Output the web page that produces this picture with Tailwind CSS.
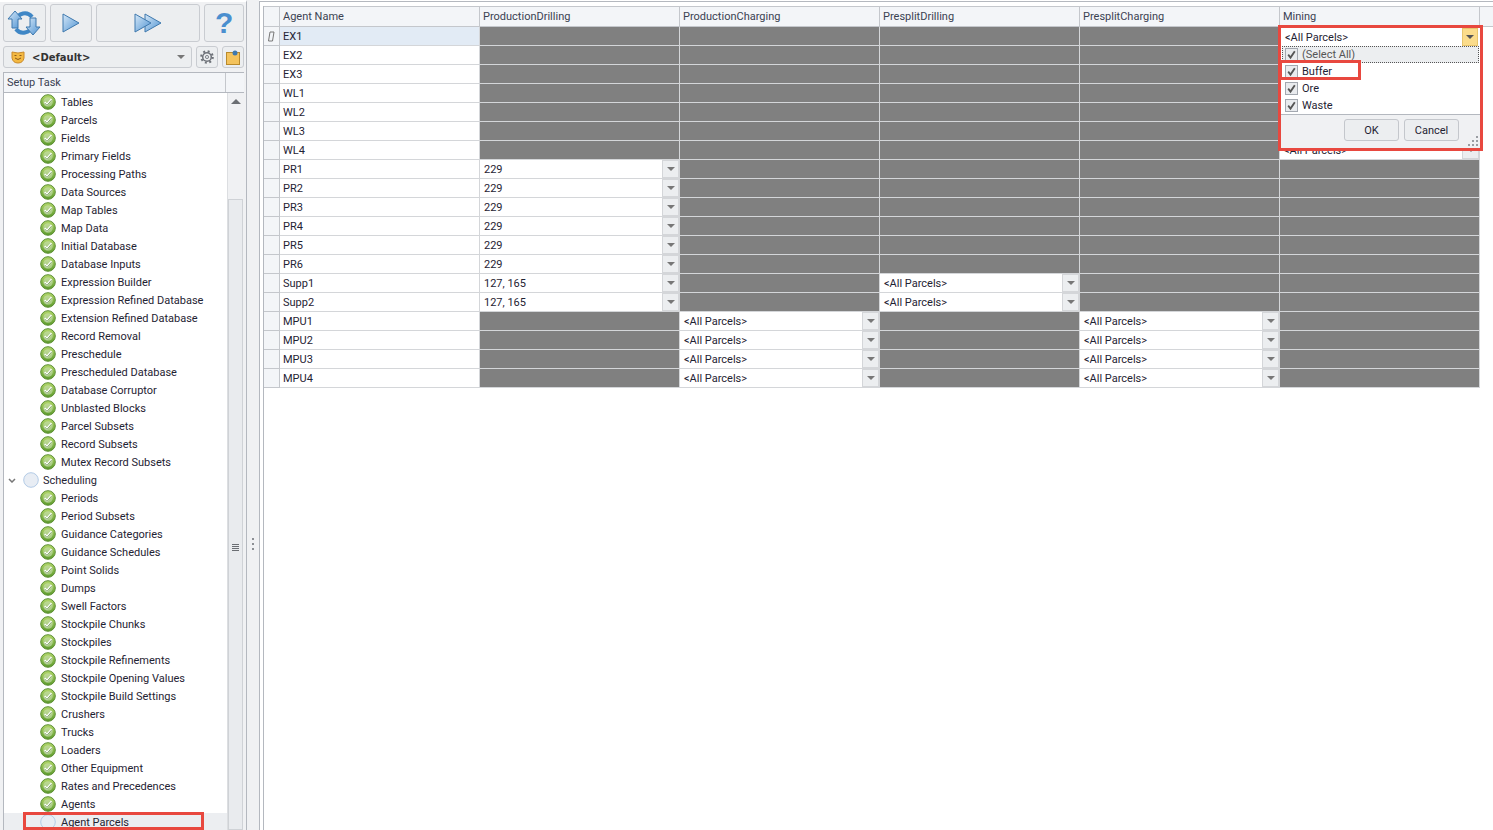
<!DOCTYPE html>
<html lang="en">
<head>
  <meta charset="UTF-8" />
  <title>Agent Parcels</title>
  <script src="https://cdn.jsdelivr.net/npm/@tailwindcss/browser@4"></script>
</head>
<body class="h-screen overflow-hidden bg-white font-['Roboto',sans-serif] text-[11px] text-[#1f2333]">
<svg class="absolute h-0 w-0">
  <defs>
    <linearGradient id="g" x1="0" y1="0" x2="0" y2="1"><stop offset="0" stop-color="#b4d86a"/><stop offset="1" stop-color="#5c9a2c"/></linearGradient>
    <linearGradient id="b" x1="0" y1="0" x2="1" y2="1"><stop offset="0" stop-color="#d6e8f8"/><stop offset="1" stop-color="#4f93d2"/></linearGradient>
    <symbol id="ok" viewBox="0 0 16 16">
      <circle cx="8" cy="8" r="7.3" fill="url(#g)" stroke="#5d8f35"/>
      <circle cx="8" cy="8" r="4.8" fill="#d3e6c0" fill-opacity=".55"/>
      <path d="M4.6 8.2 7 10.6 11.6 5.4" fill="none" stroke="#fff" stroke-width="2"/>
      <path d="M4.6 8.9 7 11.3 11.6 6.1" fill="none" stroke="#4d7d2b" stroke-width=".7"/>
    </symbol>
    <symbol id="todo" viewBox="0 0 16 16">
      <circle cx="8" cy="8" r="7.3" fill="#e8edf4" stroke="#b3cbe6"/>
    </symbol>
    <symbol id="tick" viewBox="0 0 13 13">
      <rect x=".5" y=".5" width="12" height="12" fill="#e9ebee" stroke="#a3a8b0"/>
      <path d="M3.2 6.6 5.5 9.6 9.8 3.2" fill="none" stroke="#555" stroke-width="1.8"/>
    </symbol>
  </defs>
</svg>

<div class="flex h-full">
  <!-- left panel -->
  <aside class="flex h-full w-[247px] shrink-0 flex-col border-r border-t-2 border-[#b4b8bf] border-t-white bg-[#f0f1f3] pl-[3px] pr-[2px] pt-[2px]">
    <div class="flex h-[38px] gap-[4px]">
      <button class="flex w-[43px] items-center justify-center rounded-[3px] border border-[#c9ccd1] bg-[#eceef0]">
        <svg width="34" height="30" viewBox="0 0 34 30">
          <path d="M9 12 A9 9 0 0 1 25 9" fill="none" stroke="#3f87c6" stroke-width="4"/>
          <path d="M25 18 A9 9 0 0 1 9 21" fill="none" stroke="#3f87c6" stroke-width="4"/>
          <path d="M1 11 8 3 15 11 11 11 11 20 5 20 5 11Z" fill="url(#b)" stroke="#3f79ae"/>
          <path d="M19 19 26 27 33 19 29 19 29 10 23 10 23 19Z" fill="url(#b)" stroke="#3f79ae"/>
        </svg>
      </button>
      <button class="flex w-[42px] items-center justify-center rounded-[3px] border border-[#c9ccd1] bg-[#eceef0]">
        <svg width="20" height="22" viewBox="0 0 20 22"><path d="M2 2 18 11 2 20Z" fill="url(#b)" stroke="#3f79ae"/></svg>
      </button>
      <button class="flex w-[105px] items-center justify-center rounded-[3px] border border-[#c9ccd1] bg-[#eceef0]">
        <svg width="30" height="22" viewBox="0 0 30 22"><path d="M12 2 28 11 12 20Z" fill="url(#b)" stroke="#3f79ae"/><path d="M2 2 18 11 2 20Z" fill="url(#b)" stroke="#3f79ae"/></svg>
      </button>
      <button class="flex w-[40px] items-center justify-center rounded-[3px] border border-[#c9ccd1] bg-[#eceef0] font-['Liberation_Sans',sans-serif] text-[30px] font-bold leading-none text-[#4a8fcf]">?</button>
    </div>
    <div class="mt-[4px] flex h-[22px] gap-[4px]">
      <div class="flex w-[190px] items-center rounded-[3px] border border-[#c9ccd1] bg-[#eceef0] pl-[7px] pr-[6px]">
        <svg width="14" height="14" viewBox="0 0 14 14"><path d="M1 2Q7 4 13 2V8Q12 13 7 13 2 13 1 8Z" fill="#f4b942" stroke="#c98a2a"/><path d="M4 8Q7 11 10 8" fill="none" stroke="#8a5a1a"/><path d="M3.500 5.500H5.500M8.500 5.500H10.500" stroke="#8a5a1a"/></svg>
        <span class="ml-[7px] font-['DejaVu_Sans',sans-serif] text-[10px] font-bold text-[#333]">&lt;Default&gt;</span>
        <svg class="ml-auto" width="8" height="4" viewBox="0 0 8 4"><path d="M0 0H8L4 4Z" fill="#777"/></svg>
      </div>
      <button class="flex w-[22px] items-center justify-center rounded-[3px] border border-[#c9ccd1] bg-[#eceef0]">
        <svg width="14" height="14" viewBox="0 0 14 14"><circle cx="7" cy="7" r="4.300" fill="none" stroke="#6d7178" stroke-width="1.500"/><circle cx="7" cy="7" r="5.800" fill="none" stroke="#6d7178" stroke-width="2" stroke-dasharray="2 2.550"/><circle cx="7" cy="7" r="1.600" fill="#dfe2e6" stroke="#6d7178" stroke-width=".8"/></svg>
      </button>
      <button class="flex w-[22px] items-center justify-center rounded-[3px] border border-[#c9ccd1] bg-[#eceef0]">
        <svg width="14" height="15" viewBox="0 0 14 15"><rect x=".5" y="2.500" width="13" height="12" fill="#f4c35c" stroke="#b98a2c"/><circle cx="9" cy="3" r="2.500" fill="#3f79ae"/></svg>
      </button>
    </div>
    <div class="mt-[4px] flex min-h-0 flex-1 flex-col border-l border-t border-[#b4b8bf] bg-white">
      <div class="flex h-[20px] shrink-0 border-b border-[#b4b8bf] bg-[#f3f5f8]">
        <div class="flex w-[222px] items-center border-r border-[#c4c7cc] pl-[3px] pt-[2px] text-[#3b4252]">Setup Task</div>
      </div>
      <div class="flex min-h-0 flex-1">
        <ul id="tree" class="min-w-0 flex-1 overflow-hidden pt-0"></ul>
        <div class="relative h-full w-[17px] shrink-0 border-l border-[#dcdee1] bg-[#f0f1f3]">
          <svg class="absolute left-[3px] top-[6px]" width="10" height="5" viewBox="0 0 10 5"><path d="M0 5H10L5 0Z" fill="#6b6e73"/></svg>
          <div class="absolute bottom-0 left-0 top-[106px] w-[15px] border border-[#cfd2d6] bg-[#e9ebee]">
            <div class="absolute left-[3px] top-[344px] h-[7px] w-[7px] border-y-[3px] border-double border-[#6b6e73]"></div>
          </div>
        </div>
      </div>
    </div>
  </aside>

  <!-- splitter -->
  <div class="flex h-full w-[12px] shrink-0 flex-col items-center justify-center gap-[3px] bg-[#f0f1f3] pt-[258px]">
    <i class="h-[2px] w-[2px] bg-[#8c8f94]"></i><i class="h-[2px] w-[2px] bg-[#8c8f94]"></i><i class="h-[2px] w-[2px] bg-[#8c8f94]"></i>
  </div>

  <!-- grid panel -->
  <main class="relative mt-px h-[829px] min-w-0 flex-1 border-l border-t border-[#b4b8bf] bg-white pl-[3px] pt-[4px]">
    <div class="h-full border-l border-[#b4b8bf]">
      <div id="head" class="flex h-[21px] border-y border-[#c4c7cc] bg-[#f3f5f8] text-[#3b4252]"></div>
      <div id="rows"></div>
    </div>

    <!-- filter dropdown -->
    <div class="absolute left-[1018px] top-[23px] flex h-[126px] w-[205px] flex-col border-[3px] border-[#e8483f] bg-white">
      <div class="flex h-[18px] shrink-0 items-center pl-[4px] pr-[2px]">
        <span class="flex-1 pt-[2px]">&lt;All Parcels&gt;</span>
        <div class="flex h-full w-[16px] items-center justify-center border border-[#e8c56d] bg-[#fbdc8b]">
          <svg width="8" height="4" viewBox="0 0 8 4"><path d="M0 0H8L4 4Z" fill="#555"/></svg>
        </div>
      </div>
      <div class="mx-[1px] flex h-[17px] items-center gap-[4px] border border-dotted border-[#555] bg-[#eceef0] pl-[2px] text-[#555]">
        <svg width="13" height="13"><use href="#tick"/></svg><span class="pt-[2px]">(Select All)</span>
      </div>
      <div class="flex h-[17px] items-center gap-[4px] pl-[4px]"><svg width="13" height="13"><use href="#tick"/></svg><span class="pt-[2px]">Buffer</span></div>
      <div class="flex h-[17px] items-center gap-[4px] pl-[4px]"><svg width="13" height="13"><use href="#tick"/></svg><span class="pt-[2px]">Ore</span></div>
      <div class="flex h-[17px] items-center gap-[4px] pl-[4px]"><svg width="13" height="13"><use href="#tick"/></svg><span class="pt-[2px]">Waste</span></div>
      <div class="relative flex flex-1 items-start justify-end gap-[5px] border-t border-[#b4b8bf] bg-[#f0f1f3] pr-[21px] pt-[4px]">
        <button class="h-[22px] w-[55px] rounded-[3px] border border-[#c4c7cc] bg-[#eceef0] pt-[2px]">OK</button>
        <button class="h-[22px] w-[55px] rounded-[3px] border border-[#c4c7cc] bg-[#eceef0] pt-[2px]">Cancel</button>
        <svg class="absolute bottom-[1px] right-[1px]" width="11" height="11" viewBox="0 0 11 11" fill="#9a9da2"><rect x="8" y="0" width="2" height="2"/><rect x="4" y="4" width="2" height="2"/><rect x="8" y="4" width="2" height="2"/><rect x="0" y="8" width="2" height="2"/><rect x="4" y="8" width="2" height="2"/><rect x="8" y="8" width="2" height="2"/></svg>
      </div>
    </div>
    <div class="absolute left-[1019px] top-[58px] h-[20px] w-[82px] border-[3px] border-[#e8483f]"></div>
  </main>
</div>

<!-- marker round the current task in the tree -->
<div class="absolute left-[23px] top-[812px] h-[18px] w-[181px] border-[3px] border-[#e8483f]"></div>

<script>
  var done = ['Tables','Parcels','Fields','Primary Fields','Processing Paths','Data Sources','Map Tables','Map Data','Initial Database','Database Inputs','Expression Builder','Expression Refined Database','Extension Refined Database','Record Removal','Preschedule','Prescheduled Database','Database Corruptor','Unblasted Blocks','Parcel Subsets','Record Subsets','Mutex Record Subsets','*Scheduling','Periods','Period Subsets','Guidance Categories','Guidance Schedules','Point Solids','Dumps','Swell Factors','Stockpile Chunks','Stockpiles','Stockpile Refinements','Stockpile Opening Values','Stockpile Build Settings','Crushers','Trucks','Loaders','Other Equipment','Rates and Precedences','Agents','!Agent Parcels'];
  document.getElementById('tree').innerHTML = done.map(function (t) {
    if (t[0] == '*') return '<li class="flex h-[18px] items-center pl-[4px] whitespace-nowrap"><svg width="8" height="5" viewBox="0 0 8 5" class="mr-[7px]"><path d="M1 1 4 4 7 1" fill="none" stroke="#777" stroke-width="1.500"/></svg><svg width="16" height="16" class="mr-[4px]"><use href="#todo"/></svg><span class="pt-[2px]">' + t.slice(1) + '</span></li>';
    if (t[0] == '!') return '<li class="flex h-[18px] items-center bg-[#eceef1] pl-[36px] whitespace-nowrap"><svg width="16" height="16" class="mr-[5px]"><use href="#todo"/></svg><span class="pt-[2px]">' + t.slice(1) + '</span></li>';
    return '<li class="flex h-[18px] items-center pl-[36px] whitespace-nowrap"><svg width="16" height="16" class="mr-[5px]"><use href="#ok"/></svg><span class="pt-[2px]">' + t + '</span></li>';
  }).join('');

  var cols = ['ProductionDrilling','ProductionCharging','PresplitDrilling','PresplitCharging','Mining'];
  document.getElementById('head').innerHTML =
    '<div class="w-[16px] shrink-0 border-r border-[#c4c7cc]"></div>' +
    '<div class="flex w-[200px] shrink-0 items-center border-r border-[#c4c7cc] pl-[3px] pt-[2px]">Agent Name</div>' +
    cols.map(function (c) { return '<div class="flex w-[200px] shrink-0 items-center border-r border-[#c4c7cc] pl-[3px] pt-[2px]">' + c + '</div>'; }).join('');

  // rows under the open dropdown keep an empty cell, it hides them anyway
  var P = '<All Parcels>', U = ' ';
  var rows = [
    ['EX1',0,0,0,0,U],['EX2',0,0,0,0,U],['EX3',0,0,0,0,U],['WL1',0,0,0,0,U],['WL2',0,0,0,0,U],['WL3',0,0,0,0,U],['WL4',0,0,0,0,P],
    ['PR1','229',0,0,0,0],['PR2','229',0,0,0,0],['PR3','229',0,0,0,0],['PR4','229',0,0,0,0],['PR5','229',0,0,0,0],['PR6','229',0,0,0,0],
    ['Supp1','127, 165',0,P,0,0],['Supp2','127, 165',0,P,0,0],
    ['MPU1',0,P,0,P,0],['MPU2',0,P,0,P,0],['MPU3',0,P,0,P,0],['MPU4',0,P,0,P,0]
  ];
  function esc(s) { return s.replace(/</g, '&lt;').replace(/>/g, '&gt;'); }
  document.getElementById('rows').innerHTML = rows.map(function (r, i) {
    var pen = i == 0 ? '<svg width="9" height="11" viewBox="0 0 9 11"><path d="M3 1H7L5.500 10H1.500Z" fill="none" stroke="#777"/></svg>' : '';
    var html = '<div class="flex h-[19px]"><div class="flex w-[16px] shrink-0 items-center justify-center border-b border-r border-[#c4c7cc] bg-[#f3f5f8]">' + pen + '</div>';
    html += '<div class="flex w-[200px] shrink-0 items-center border-b border-r border-[#d4d6d9] pl-[3px] pt-[2px] ' + (i == 0 ? 'bg-[#e2ebf5]' : 'bg-white') + '">' + r[0] + '</div>';
    for (var c = 1; c < 6; c++) {
      if (!r[c]) { html += '<div class="w-[200px] shrink-0 border-b border-r border-[#d4d6d9] bg-[#808080]"></div>'; continue; }
      html += '<div class="flex w-[200px] shrink-0 items-center border-b border-r border-[#d4d6d9] bg-white pl-[4px]"><span class="flex-1 pt-[2px]">' + esc(r[c]) + '</span>' +
        '<span class="flex h-full w-[17px] items-center justify-center border border-[#d4d6d9] bg-[#eceef0]"><svg width="8" height="4" viewBox="0 0 8 4"><path d="M0 0H8L4 4Z" fill="#777"/></svg></span></div>';
    }
    return html + '</div>';
  }).join('');
</script>
</body>
</html>
